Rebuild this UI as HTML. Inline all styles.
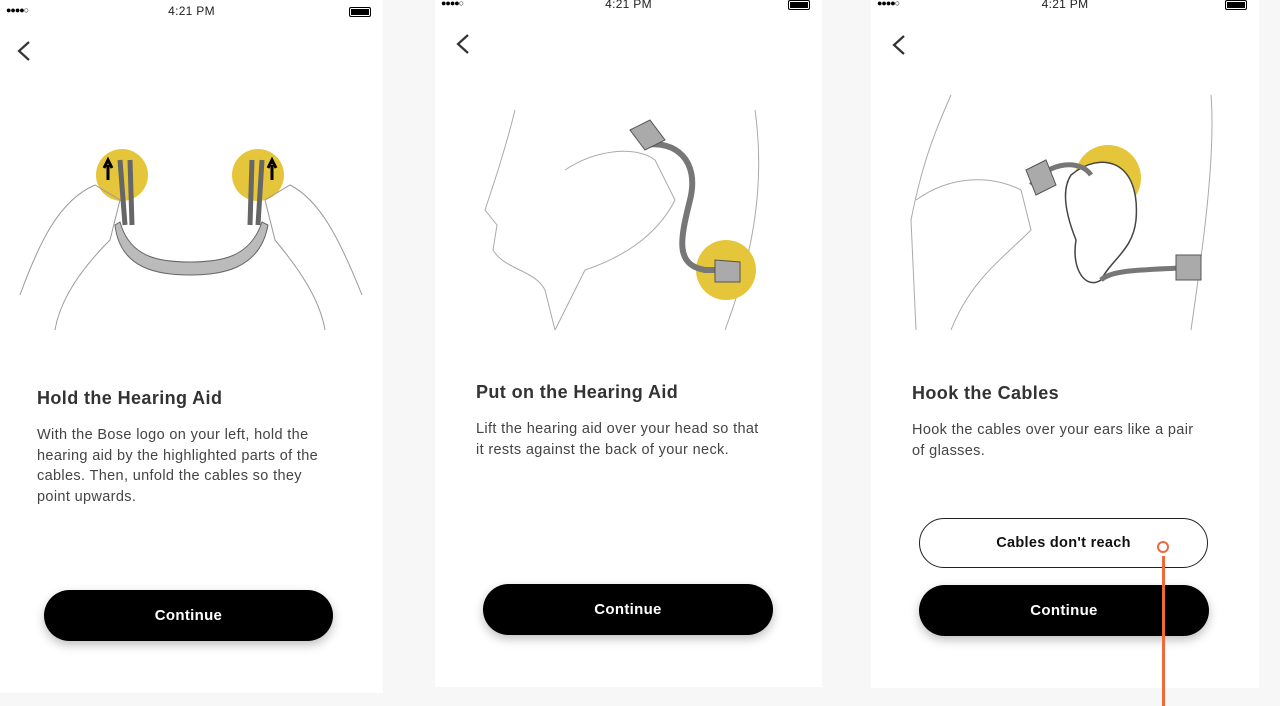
<!DOCTYPE html>
<html><head><style>
body{margin:0;width:1280px;height:706px;background:#f7f7f7;position:relative;overflow:hidden;font-family:"Liberation Sans",sans-serif;color:#333}
.p{position:absolute;background:#fff;top:0}
.sb{position:absolute;top:3px;left:0;right:0;font-size:12px;height:16px}
.sig{position:absolute;left:6px;top:1px;font-size:9px;letter-spacing:-1px;color:#000}
.tm{position:absolute;left:0;right:0;text-align:center;color:#222;letter-spacing:.3px}
.bat{position:absolute;right:12px;top:3px;width:20px;height:8px;border:1px solid #000;border-radius:2px;background:#000;box-shadow:inset 0 0 0 1px #fff}
h2{position:absolute;margin:0;font-size:18px;font-weight:bold;color:#333;letter-spacing:.4px}
.t{position:absolute;font-size:14.5px;line-height:20.5px;color:#444;letter-spacing:.35px}
.btn{position:absolute;height:51px;border-radius:26px;background:#000;color:#fff;font-weight:bold;font-size:15px;text-align:center;line-height:51px;box-shadow:0 4px 10px rgba(0,0,0,.25);letter-spacing:.3px}
.ob{position:absolute;height:48px;border-radius:25px;border:1.5px solid #222;background:#fff;font-weight:bold;font-size:14.5px;text-align:center;line-height:48px;color:#111;letter-spacing:.3px}
svg{position:absolute;left:0;top:0}
</style></head><body>

<div class="p" style="left:0;width:383px;height:693px">
<div class="sb" style="top:4px"><span class="sig">●●●●○</span><span class="tm">4:21 PM</span><span class="bat"></span></div>
<svg width="383" height="340" fill="none" stroke="#999" stroke-width="1">
<path d="M29 42 L19 51 L29 60" stroke="#333" stroke-width="2.2"/>
<circle cx="122" cy="175" r="26" fill="#e5c53a" stroke="none"/>
<circle cx="258" cy="175" r="26" fill="#e5c53a" stroke="none"/>
<path d="M20 295 C40 240 60 200 95 185 L120 200 L110 240 C80 270 60 300 55 330"/>
<path d="M362 295 C340 240 320 200 290 185 L265 200 L275 240 C300 270 320 300 325 330"/>
<path d="M115 225 C120 270 160 275 190 275 C220 275 260 270 268 225 L262 222 C250 258 220 262 190 262 C160 262 130 258 120 222Z" fill="#bbb" stroke="#666"/>
<path d="M120 160 L125 225 M130 160 L132 225 M262 160 L258 225 M252 160 L250 225" stroke="#666" stroke-width="5"/>
<path d="M108 180 L108 165 M104 168 L108 160 L112 168 M272 180 L272 165 M268 168 L272 160 L276 168" stroke="#000" stroke-width="3"/>
</svg>
<h2 style="left:37px;top:388px">Hold the Hearing Aid</h2>
<div class="t" style="left:37px;top:425px;width:296px">With the Bose logo on your left, hold the hearing aid by the highlighted parts of the cables. Then, unfold the cables so they point upwards.</div>
<div class="btn" style="left:44px;top:590px;width:289px">Continue</div>
</div>

<div class="p" style="left:435px;width:387px;height:687px">
<div class="sb" style="top:-3px"><span class="sig">●●●●○</span><span class="tm">4:21 PM</span><span class="bat"></span></div>
<svg width="387" height="340" fill="none" stroke="#aaa" stroke-width="1">
<path d="M33 35 L23 44 L33 53" stroke="#333" stroke-width="2.2"/>
<path d="M80 110 C70 150 60 180 50 210 L62 225 L58 250 C70 270 100 270 110 290 L120 330"/>
<path d="M320 110 C330 180 320 250 290 330"/>
<path d="M130 170 C160 150 200 145 220 160 L240 200 C220 240 180 260 150 270 L120 330"/>
<circle cx="291" cy="270" r="30" fill="#e5c53a" stroke="none"/>
<path d="M210 145 C240 140 265 160 255 200 C245 240 240 265 270 270 L300 270" stroke="#777" stroke-width="6"/>
<path d="M195 130 L215 120 L230 140 L210 150Z M280 260 L305 262 L305 282 L280 282Z" fill="#aaa" stroke="#555"/>
</svg>
<h2 style="left:41px;top:382px">Put on the Hearing Aid</h2>
<div class="t" style="left:41px;top:419px;width:285px">Lift the hearing aid over your head so that it rests against the back of your neck.</div>
<div class="btn" style="left:48px;top:584px;width:290px">Continue</div>
</div>

<div class="p" style="left:871px;width:388px;height:688px">
<div class="sb" style="top:-3px"><span class="sig">●●●●○</span><span class="tm">4:21 PM</span><span class="bat"></span></div>
<svg width="388" height="340" fill="none" stroke="#aaa" stroke-width="1">
<path d="M33 36 L23 45 L33 54" stroke="#333" stroke-width="2.2"/>
<circle cx="237" cy="178" r="33" fill="#e5c53a" stroke="none"/>
<path d="M80 95 C60 140 50 170 40 220 L45 330"/>
<path d="M340 95 C345 160 330 260 320 330"/>
<path d="M45 200 C80 175 120 175 150 190 L160 230 C130 260 100 280 80 330"/>
<path d="M200 175 C230 150 270 160 265 220 C262 250 240 260 230 280 C215 290 200 270 205 240 C195 215 190 190 200 175Z" fill="#fff" stroke="#444" stroke-width="1.5"/>
<path d="M160 185 C180 160 210 160 220 175 M230 280 C240 270 270 270 310 268" stroke="#777" stroke-width="5"/>
<path d="M155 170 L175 160 L185 185 L165 195Z M305 255 L330 255 L330 280 L305 280Z" fill="#aaa" stroke="#555"/>
</svg>
<h2 style="left:41px;top:383px">Hook the Cables</h2>
<div class="t" style="left:41px;top:420px;width:296px">Hook the cables over your ears like a pair of glasses.</div>
<div class="ob" style="left:48px;top:518px;width:287px">Cables don't reach</div>
<div class="btn" style="left:48px;top:585px;width:290px">Continue</div>
</div>

<div style="position:absolute;left:1157px;top:541px;width:8px;height:8px;border:2.5px solid #ee6a3a;border-radius:50%;background:#fff"></div>
<div style="position:absolute;left:1162px;top:556px;width:3px;height:150px;background:#ee6a3a"></div>
</body></html>
